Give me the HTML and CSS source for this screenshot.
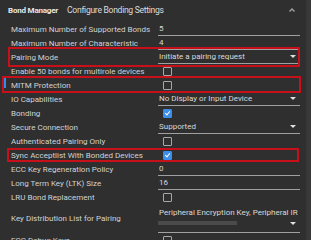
FILE: index.html
```html
<!DOCTYPE html>
<html lang="en">
<head>
    <meta charset="UTF-8">
    <title>Bond Manager</title>
    <link rel="stylesheet" href="styles.css">
</head>
<body>

<div class="panel">
    <div class="panel-header">
        <span class="panel-tag">Bond Manager</span>
        <span class="panel-title">Configure Bonding Settings</span>
        <svg class="collapse" width="8" height="6" viewBox="0 0 8 6"><path d="M1.5 4.5 L4 2 L6.5 4.5" fill="none" stroke="#a0a0a0" stroke-width="1.4"/></svg>
    </div>

    <div class="rows">
        <div class="row">
            <label>Maximum Number of Supported Bonds</label>
            <div class="field text">5</div>
        </div>
        <div class="row">
            <label>Maximum Number of Characteristic</label>
            <div class="field text">4</div>
        </div>
        <div class="row marked mark-pairing">
            <label>Pairing Mode</label>
            <div class="field select">Initiate a pairing request<span class="arrow"></span></div>
        </div>
        <div class="row">
            <label>Enable 50 bonds for multirole devices</label>
            <div class="field"><span class="check"></span></div>
        </div>
        <div class="row marked mark-mitm focused">
            <label>MITM Protection</label>
            <div class="field"><span class="check"></span></div>
        </div>
        <div class="row">
            <label>IO Capabilities</label>
            <div class="field select">No Display or Input Device<span class="arrow"></span></div>
        </div>
        <div class="row">
            <label>Bonding</label>
            <div class="field"><span class="check on"></span></div>
        </div>
        <div class="row">
            <label>Secure Connection</label>
            <div class="field select">Supported<span class="arrow"></span></div>
        </div>
        <div class="row">
            <label>Authenticated Pairing Only</label>
            <div class="field"><span class="check"></span></div>
        </div>
        <div class="row marked mark-sync">
            <label>Sync Acceptlist With Bonded Devices</label>
            <div class="field"><span class="check on"></span></div>
        </div>
        <div class="row">
            <label>ECC Key Regeneration Policy</label>
            <div class="field text">0</div>
        </div>
        <div class="row">
            <label>Long Term Key (LTK) Size</label>
            <div class="field text">16</div>
        </div>
        <div class="row">
            <label>LRU Bond Replacement</label>
            <div class="field"><span class="check"></span></div>
        </div>
        <div class="row tall">
            <label>Key Distribution List for Pairing</label>
            <div class="field multi">
                <div class="multi-value">Peripheral Encryption Key, Peripheral IR</div>
                <div class="multi-line"><span class="chip-bar"></span><span class="arrow"></span></div>
            </div>
        </div>
        <div class="row">
            <label>ECC Debug Keys</label>
            <div class="field"><span class="check"></span></div>
        </div>
    </div>
</div>

</body>
</html>
```

FILE: styles.css
```css
body {
    margin: 0;
    padding: 0;
    background-color: #2f2f2f;
    font-family: Roboto, "Liberation Sans", sans-serif;
    overflow: hidden;
}
.panel {
    width: 311px;
    height: 240px;
    background-color: #2f2f2f;
    border-right: 5px solid #383838;
    box-sizing: border-box;
    overflow: hidden;
}
.panel-header {
    display: flex;
    align-items: center;
    height: 20px;
    padding: 0 0 0 8px;
}
.panel-tag {
    font-size: 8px;
    font-weight: bold;
    color: #e6e6e6;
    letter-spacing: -0.2px;
}
.panel-title {
    margin-left: 9px;
    font-size: 8.6px;
    letter-spacing: -0.3px;
    color: #dcdcdc;
}
.collapse {
    margin-left: auto;
    margin-right: 10px;
}
.rows {
    padding-top: 2px;
}
.row {
    position: relative;
    display: grid;
    grid-template-columns: 147px 142px;
    align-items: center;
    height: 14px;
    padding-left: 11px;
}
.row label {
    font-size: 8px;
    color: #d2d2d2;
    white-space: nowrap;
}
.field {
    position: relative;
    display: flex;
    align-items: center;
    height: 14px;
    box-sizing: border-box;
    font-size: 8px;
    color: #d8d8d8;
}
.field.text, .field.select {
    border-bottom: 1px solid #a0a0a0;
    padding-left: 1px;
}
.arrow {
    margin-left: auto;
    margin-right: 4px;
    width: 0;
    height: 0;
    border-left: 3px solid transparent;
    border-right: 3px solid transparent;
    border-top: 3px solid #e0e0e0;
}
.check {
    width: 7px;
    height: 7px;
    margin-left: 5px;
    border: 1px solid #a8a8a8;
    border-radius: 1px;
}
.check.on {
    border-color: #3d8eea;
    background-color: #3d8eea;
    position: relative;
}
.check.on::after {
    content: "";
    position: absolute;
    left: 2px;
    top: 0;
    width: 2px;
    height: 4px;
    border: solid #fff;
    border-width: 0 1px 1px 0;
    transform: rotate(40deg);
}
.row.tall {
    height: 29px;
}
.field.multi {
    height: 29px;
    flex-direction: column;
    align-items: stretch;
    justify-content: center;
    border-bottom: 1px solid #a0a0a0;
}
.multi-value {
    padding-left: 1px;
    line-height: 10px;
}
.multi-line {
    display: flex;
    align-items: center;
    height: 10px;
}
.chip-bar {
    width: 79px;
    height: 4px;
    background-color: #4a4a4a;
}
/* red annotation boxes */
.marked::after {
    content: "";
    position: absolute;
    border: 2px solid #c8101a;
    pointer-events: none;
}
.mark-pairing::after {
    left: 8px;
    right: 6px;
    top: -3px;
    bottom: -3px;
}
.mark-mitm::after {
    left: 2px;
    right: 5px;
    top: -2px;
    bottom: -1px;
}
.mark-sync::after {
    left: 7px;
    right: 7px;
    top: 0;
    bottom: 0;
}
.focused::before {
    content: "";
    position: absolute;
    left: 4px;
    top: 0;
    width: 2px;
    height: 10px;
    background-color: #2f8ef2;
}
```
